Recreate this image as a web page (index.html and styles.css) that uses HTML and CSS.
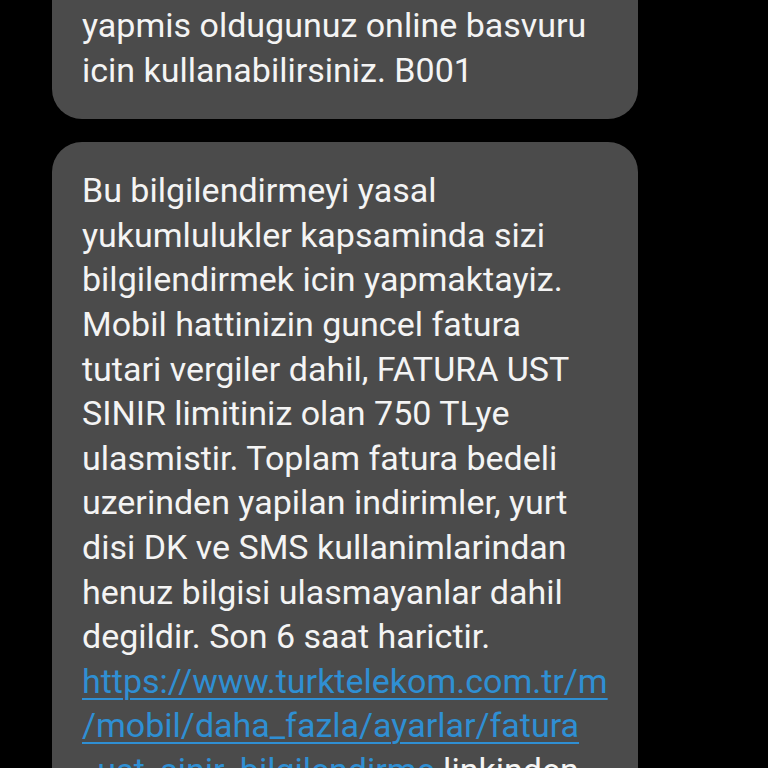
FILE: index.html
```html
<!DOCTYPE html>
<html>
<head>
<meta charset="utf-8">
<link rel="stylesheet" href="styles.css">
</head>
<body>
<div class="thread">
  <div class="bubble bubble-cut">
    <p class="msg">yapmis oldugunuz online basvuru<br>icin kullanabilirsiniz. B001</p>
  </div>
  <div class="bubble">
    <p class="msg">Bu bilgilendirmeyi yasal<br>yukumlulukler kapsaminda sizi<br>bilgilendirmek icin yapmaktayiz.<br>Mobil hattinizin guncel fatura<br>tutari vergiler dahil, FATURA UST<br>SINIR limitiniz olan 750 TLye<br>ulasmistir. Toplam fatura bedeli<br>uzerinden yapilan indirimler, yurt<br>disi DK ve SMS kullanimlarindan<br>henuz bilgisi ulasmayanlar dahil<br>degildir. Son 6 saat harictir.<br><a class="link" href="#">https://www.turktelekom.com.tr/m<br>/mobil/daha_fazla/ayarlar/fatura<br>_ust_sinir_bilgilendirme</a> linkinden<br>bilgilendirme tercihlerinizi</p>
  </div>
</div>
</body>
</html>
```
FILE: styles.css
```css
html, body {
  margin: 0;
  padding: 0;
  background: #000;
  height: 768px;
  overflow: hidden;
}
.thread {
  display: flex;
  flex-direction: column;
  gap: 23px;
  padding-left: 52px;
  width: 586px;
}
.bubble {
  background: #4b4b4b;
  border-radius: 30px;
  padding: 26px 30px 27px 30px;
}
.bubble-cut {
  border-radius: 0 0 30px 30px;
  padding-top: 3px;
}
.msg {
  margin: 0;
  font-family: Roboto, "Noto Sans", sans-serif;
  font-size: 34px;
  line-height: 44.6px;
  color: #f4f4f4;
  white-space: nowrap;
}
.link {
  color: #2f8fd3;
  text-decoration: underline;
  text-decoration-thickness: 2px;
  text-underline-offset: 5px;
}
```
